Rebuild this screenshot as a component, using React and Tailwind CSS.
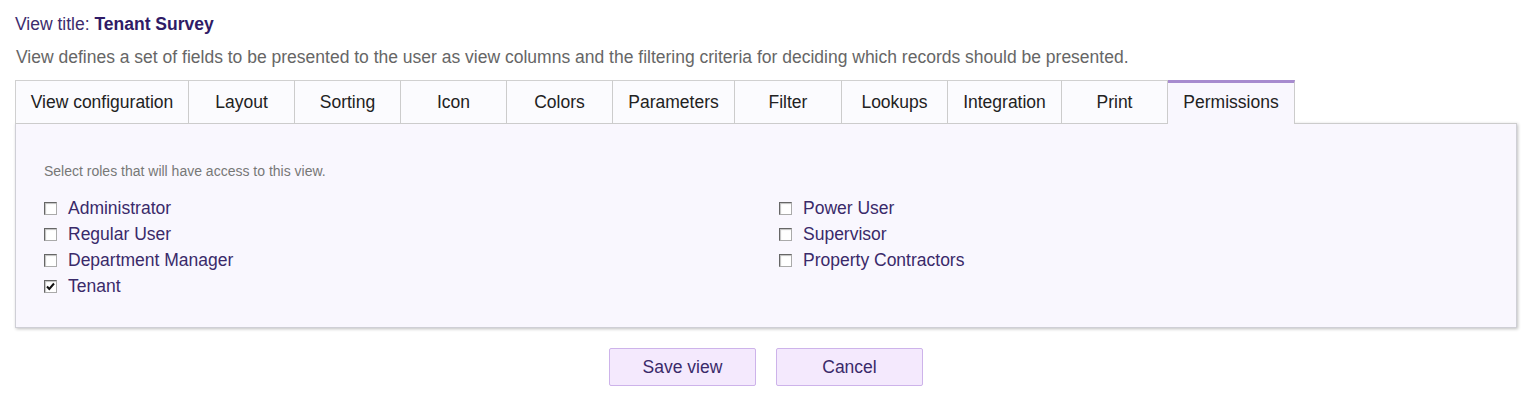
import React, { useState } from 'react'

const tabs = [
  { label: 'View configuration', w: 'w-[174px]' },
  { label: 'Layout', w: 'w-[106px]' },
  { label: 'Sorting', w: 'w-[106px]' },
  { label: 'Icon', w: 'w-[106px]' },
  { label: 'Colors', w: 'w-[106px]' },
  { label: 'Parameters', w: 'w-[122px]' },
  { label: 'Filter', w: 'w-[107px]' },
  { label: 'Lookups', w: 'w-[106px]' },
  { label: 'Integration', w: 'w-[114px]' },
  { label: 'Print', w: 'w-[106px]' },
  { label: 'Permissions', w: 'w-[127px]' },
]

const leftRoles = ['Administrator', 'Regular User', 'Department Manager', 'Tenant']
const rightRoles = ['Power User', 'Supervisor', 'Property Contractors']

const RoleCheck = ({ label, checked, onToggle }) => (
  <label className="flex items-center h-[26px] cursor-pointer">
    <span className="w-[13px] h-[13px] border border-t-[#666] border-l-[#666] border-r-[#aaa] border-b-[#aaa] bg-white flex items-center justify-center shadow-[inset_1px_1px_1px_rgba(0,0,0,0.25)]">
      {checked && (
        <svg width="11" height="11" viewBox="0 0 11 11">
          <path d="M2 5.5 L4.3 8 L9 2.5" stroke="#111" strokeWidth="2" fill="none" />
        </svg>
      )}
    </span>
    <input type="checkbox" className="hidden" checked={checked} onChange={onToggle} />
    <span className="ml-[11px] text-[17.5px] text-[#3a2a6a]">{label}</span>
  </label>
)

const App = () => {
  const [active] = useState('Permissions')
  const [checked, setChecked] = useState({ Tenant: true })

  const toggle = (r) => setChecked({ ...checked, [r]: !checked[r] })

  return (
    <div className="w-[1529px] h-[394px] bg-white font-['Liberation_Sans',Arial,sans-serif] px-[15px]">
      {/* header */}
      <div className="pt-[13px] text-[17.5px] leading-[22px] text-[#3d2c6e]">
        View title: <span className="font-bold text-[#2f1b66]">Tenant Survey</span>
      </div>
      <div className="mt-[11px] ml-px text-[17.5px] leading-[22px] text-[#666]">
        View defines a set of fields to be presented to the user as view columns and the filtering criteria for deciding which records should be presented.
      </div>

      {/* tabs */}
      <div className="mt-[12px] flex h-[44px] w-[1502px]">
        {tabs.map((t, i) => {
          const isActive = t.label === active
          return (
            <div
              key={t.label}
              className={
                isActive
                  ? `${t.w} h-[44px] flex items-center justify-center text-[17.5px] text-[#222] bg-[#f9f7fe] border-t-[3px] border-t-[#a78bcf] border-r border-r-[#ccc] pb-[3px]`
                  : `${t.w} h-[44px] flex items-center justify-center text-[17.5px] text-[#222] bg-[#fbfbfe] border-t border-t-[#d0d0d0] border-r border-r-[#cccccc] border-b border-b-[#cccccc] ${i === 0 ? 'border-l border-l-[#d0d0d0]' : ''}`
              }
            >
              {t.label}
            </div>
          )
        })}
        <div className="flex-1 border-b border-b-[#cccccc]" />
      </div>

      {/* panel */}
      <div className="-mt-px w-[1502px] h-[205px] bg-[#f9f7fe] border border-[#cfcfd6] border-t-0 shadow-[1px_1px_3px_rgba(0,0,0,0.25)] pt-[39px] pl-[28px]">
        <div className="text-[14px] text-[#777] leading-[18px]">Select roles that will have access to this view.</div>
        <div className="mt-[15px] flex">
          <div className="w-[735px]">
            {leftRoles.map((r) => (
              <RoleCheck key={r} label={r} checked={!!checked[r]} onToggle={() => toggle(r)} />
            ))}
          </div>
          <div>
            {rightRoles.map((r) => (
              <RoleCheck key={r} label={r} checked={!!checked[r]} onToggle={() => toggle(r)} />
            ))}
          </div>
        </div>
      </div>

      {/* buttons */}
      <div className="w-[1502px] mt-[20px] flex justify-center gap-[20px]">
        <button className="w-[147px] h-[38px] bg-[#f4e9fd] border border-[#cdb3ea] rounded-[2px] text-[17.5px] text-[#3a2a6a]">Save view</button>
        <button className="w-[147px] h-[38px] bg-[#f4e9fd] border border-[#cdb3ea] rounded-[2px] text-[17.5px] text-[#3a2a6a]">Cancel</button>
      </div>
    </div>
  )
}

export default App
